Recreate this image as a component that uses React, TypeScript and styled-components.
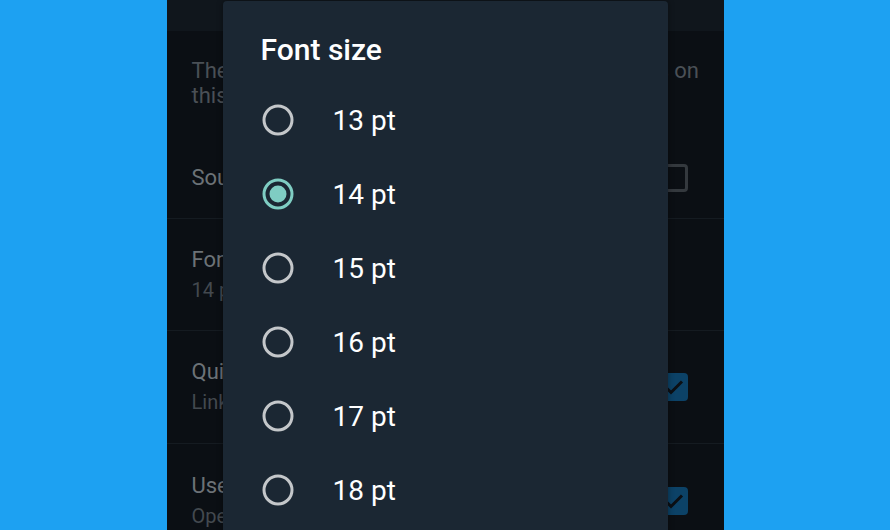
import React from "react";
import styled, { createGlobalStyle } from "styled-components";

const GlobalStyle = createGlobalStyle`
  html, body {
    margin: 0;
    padding: 0;
    background: #1da1f2;
    font-family: Roboto, "Noto Sans", sans-serif;
  }
`;

const Page = styled.div`
  width: 890px;
  height: 530px;
  display: flex;
  justify-content: center;
  background: #1da1f2;
  overflow: hidden;
`;

const Phone = styled.div`
  position: relative;
  width: 557px;
  height: 530px;
  background: #0b0f14;
  overflow: hidden;
  display: flex;
  flex-direction: column;
`;

const Header = styled.div`
  height: 31px;
  flex: none;
  background: #10161c;
`;

const Intro = styled.p`
  flex: none;
  margin: 0;
  padding: 27px 0 29px 25px;
  font-size: 22px;
  line-height: 25px;
  color: #4a5056;
  white-space: nowrap;
  overflow: hidden;
`;

const IntroLine = styled.span`
  display: block;
`;

const Row = styled.div<{ $height: number; $last?: boolean }>`
  height: ${(p) => p.$height}px;
  flex: none;
  box-sizing: border-box;
  display: flex;
  align-items: center;
  padding: 0 36px 0 25px;
  border-bottom: ${(p) => (p.$last ? "none" : "1px solid #151b21")};
`;

const RowText = styled.div`
  flex: 1;
  display: flex;
  flex-direction: column;
  gap: 6px;
`;

const RowTitle = styled.div`
  font-size: 22px;
  line-height: 25px;
  color: #6c7277;
`;

const RowSub = styled.div`
  font-size: 20px;
  line-height: 25px;
  color: #43494f;
`;

const Check = styled.div<{ $on?: boolean }>`
  width: 28px;
  height: 28px;
  box-sizing: border-box;
  border-radius: 4px;
  border: ${(p) => (p.$on ? "none" : "3px solid #34393e")};
  background: ${(p) => (p.$on ? "#0c4267" : "transparent")};
  display: flex;
  align-items: center;
  justify-content: center;
`;

const Dialog = styled.div`
  position: absolute;
  left: 56px;
  top: 1px;
  width: 445px;
  height: 560px;
  background: #1b2733;
  border-radius: 4px;
  box-shadow: 0 0 6px rgba(0, 0, 0, 0.4);
  padding: 32px 0 0 38px;
  box-sizing: border-box;
`;

const Title = styled.h2`
  margin: 0 0 16px;
  font-size: 30px;
  line-height: 34px;
  font-weight: 500;
  color: #ffffff;
`;

const Option = styled.div`
  height: 74px;
  display: flex;
  align-items: center;
  gap: 38px;
`;

const OptionLabel = styled.span`
  font-size: 28px;
  color: #ffffff;
`;

const Radio = ({ checked }: { checked?: boolean }) => (
  <svg width="34" height="34" viewBox="0 0 34 34">
    <circle
      cx="17"
      cy="17"
      r="14"
      fill="none"
      stroke={checked ? "#7fcdc3" : "#c4c7ca"}
      strokeWidth="3"
    />
    {checked && <circle cx="17" cy="17" r="8.5" fill="#7fcdc3" />}
  </svg>
);

const Tick = () => (
  <svg width="20" height="16" viewBox="0 0 20 16">
    <path d="M2 8.5 L7 13.5 L18 2.5" fill="none" stroke="#0b0f14" strokeWidth="3" />
  </svg>
);

const sizes = [13, 14, 15, 16, 17, 18];

export default function App() {
  return (
    <>
      <GlobalStyle />
      <Page>
        <Phone>
          <Header />
          <Intro>
            <IntroLine>These settings affect all of your Twitter accounts on</IntroLine>
            <IntroLine>this device.</IntroLine>
          </Intro>
          <Row $height={82}>
            <RowText>
              <RowTitle>Sound effects</RowTitle>
            </RowText>
            <Check />
          </Row>
          <Row $height={112}>
            <RowText>
              <RowTitle>Font size</RowTitle>
              <RowSub>14 pt</RowSub>
            </RowText>
          </Row>
          <Row $height={113}>
            <RowText>
              <RowTitle>Quick preview</RowTitle>
              <RowSub>Link previews in Tweets</RowSub>
            </RowText>
            <Check $on>
              <Tick />
            </Check>
          </Row>
          <Row $height={113} $last>
            <RowText>
              <RowTitle>Use in-app browser</RowTitle>
              <RowSub>Open external links with Twitter browser</RowSub>
            </RowText>
            <Check $on>
              <Tick />
            </Check>
          </Row>
          <Dialog>
            <Title>Font size</Title>
            {sizes.map((s) => (
              <Option key={s}>
                <Radio checked={s === 14} />
                <OptionLabel>{s} pt</OptionLabel>
              </Option>
            ))}
          </Dialog>
        </Phone>
      </Page>
    </>
  );
}
